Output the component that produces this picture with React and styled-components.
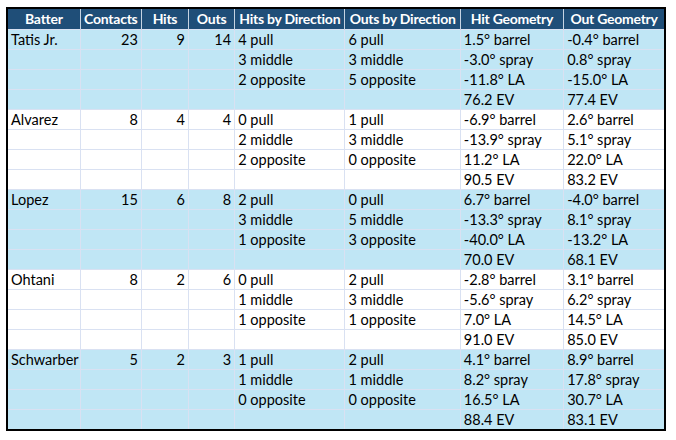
import React from "react";
import styled, { createGlobalStyle } from "styled-components";

const GlobalStyle = createGlobalStyle`
  html, body {
    margin: 0;
    padding: 0;
    background: #ffffff;
  }
  body {
    font-family: "Lato", "Liberation Sans", sans-serif;
  }
`;

const Page = styled.div`
  padding: 7px 0 0 6px;
`;

const Sheet = styled.table`
  border-collapse: collapse;
  border: 2px solid #000000;
  table-layout: fixed;
  width: 660px;
  font-size: 14.5px;
  color: #000000;
`;

const HeadCell = styled.th`
  background: #1f4e78;
  color: #ffffff;
  font-weight: 700;
  font-size: 14px;
  letter-spacing: -0.25px;
  height: 20px;
  padding: 0;
  text-align: center;
  white-space: nowrap;
  overflow: hidden;
  border-left: 1px solid #c6d3e2;
  line-height: 20px;
  &:first-child {
    border-left: none;
  }
`;

const Row = styled.tr`
  background: ${({ $shaded }) => ($shaded ? "#c0e6f5" : "#ffffff")};
`;

const Cell = styled.td`
  height: 19px;
  padding: 0 ${({ $num }) => ($num ? "3px" : "2px")} 0 ${({ $num }) => ($num ? "2px" : "3px")};
  line-height: 19px;
  border: 1px solid #d9e1f2;
  text-align: ${({ $num }) => ($num ? "right" : "left")};
  white-space: nowrap;
  overflow: hidden;
  &:first-child {
    border-left: none;
  }
  &:last-child {
    border-right: none;
  }
`;

const columns = [
  { label: "Batter", width: 73 },
  { label: "Contacts", width: 61 },
  { label: "Hits", width: 47 },
  { label: "Outs", width: 46 },
  { label: "Hits by Direction", width: 110 },
  { label: "Outs by Direction", width: 115 },
  { label: "Hit Geometry", width: 103 },
  { label: "Out Geometry", width: 101 },
];

const batters = [
  {
    name: "Tatis Jr.",
    contacts: 23,
    hits: 9,
    outs: 14,
    hitDir: ["4 pull", "3 middle", "2 opposite"],
    outDir: ["6 pull", "3 middle", "5 opposite"],
    hitGeo: ["1.5° barrel", "-3.0° spray", "-11.8° LA", "76.2 EV"],
    outGeo: ["-0.4° barrel", "0.8° spray", "-15.0° LA", "77.4 EV"],
  },
  {
    name: "Alvarez",
    contacts: 8,
    hits: 4,
    outs: 4,
    hitDir: ["0 pull", "2 middle", "2 opposite"],
    outDir: ["1 pull", "3 middle", "0 opposite"],
    hitGeo: ["-6.9° barrel", "-13.9° spray", "11.2° LA", "90.5 EV"],
    outGeo: ["2.6° barrel", "5.1° spray", "22.0° LA", "83.2 EV"],
  },
  {
    name: "Lopez",
    contacts: 15,
    hits: 6,
    outs: 8,
    hitDir: ["2 pull", "3 middle", "1 opposite"],
    outDir: ["0 pull", "5 middle", "3 opposite"],
    hitGeo: ["6.7° barrel", "-13.3° spray", "-40.0° LA", "70.0 EV"],
    outGeo: ["-4.0° barrel", "8.1° spray", "-13.2° LA", "68.1 EV"],
  },
  {
    name: "Ohtani",
    contacts: 8,
    hits: 2,
    outs: 6,
    hitDir: ["0 pull", "1 middle", "1 opposite"],
    outDir: ["2 pull", "3 middle", "1 opposite"],
    hitGeo: ["-2.8° barrel", "-5.6° spray", "7.0° LA", "91.0 EV"],
    outGeo: ["3.1° barrel", "6.2° spray", "14.5° LA", "85.0 EV"],
  },
  {
    name: "Schwarber",
    contacts: 5,
    hits: 2,
    outs: 3,
    hitDir: ["1 pull", "1 middle", "0 opposite"],
    outDir: ["2 pull", "1 middle", "0 opposite"],
    hitGeo: ["4.1° barrel", "8.2° spray", "16.5° LA", "88.4 EV"],
    outGeo: ["8.9° barrel", "17.8° spray", "30.7° LA", "83.1 EV"],
  },
];

const BatterRows = ({ batter, shaded }) =>
  [0, 1, 2, 3].map((i) => (
    <Row key={i} $shaded={shaded}>
      <Cell>{i === 0 ? batter.name : ""}</Cell>
      <Cell $num>{i === 0 ? batter.contacts : ""}</Cell>
      <Cell $num>{i === 0 ? batter.hits : ""}</Cell>
      <Cell $num>{i === 0 ? batter.outs : ""}</Cell>
      <Cell>{batter.hitDir[i] || ""}</Cell>
      <Cell>{batter.outDir[i] || ""}</Cell>
      <Cell>{batter.hitGeo[i]}</Cell>
      <Cell>{batter.outGeo[i]}</Cell>
    </Row>
  ));

export default function App() {
  return (
    <Page>
      <GlobalStyle />
      <Sheet>
        <colgroup>
          {columns.map((c) => (
            <col key={c.label} style={{ width: c.width }} />
          ))}
        </colgroup>
        <thead>
          <tr>
            {columns.map((c) => (
              <HeadCell key={c.label}>{c.label}</HeadCell>
            ))}
          </tr>
        </thead>
        <tbody>
          {batters.map((b, idx) => (
            <BatterRows key={b.name} batter={b} shaded={idx % 2 === 0} />
          ))}
        </tbody>
      </Sheet>
    </Page>
  );
}
